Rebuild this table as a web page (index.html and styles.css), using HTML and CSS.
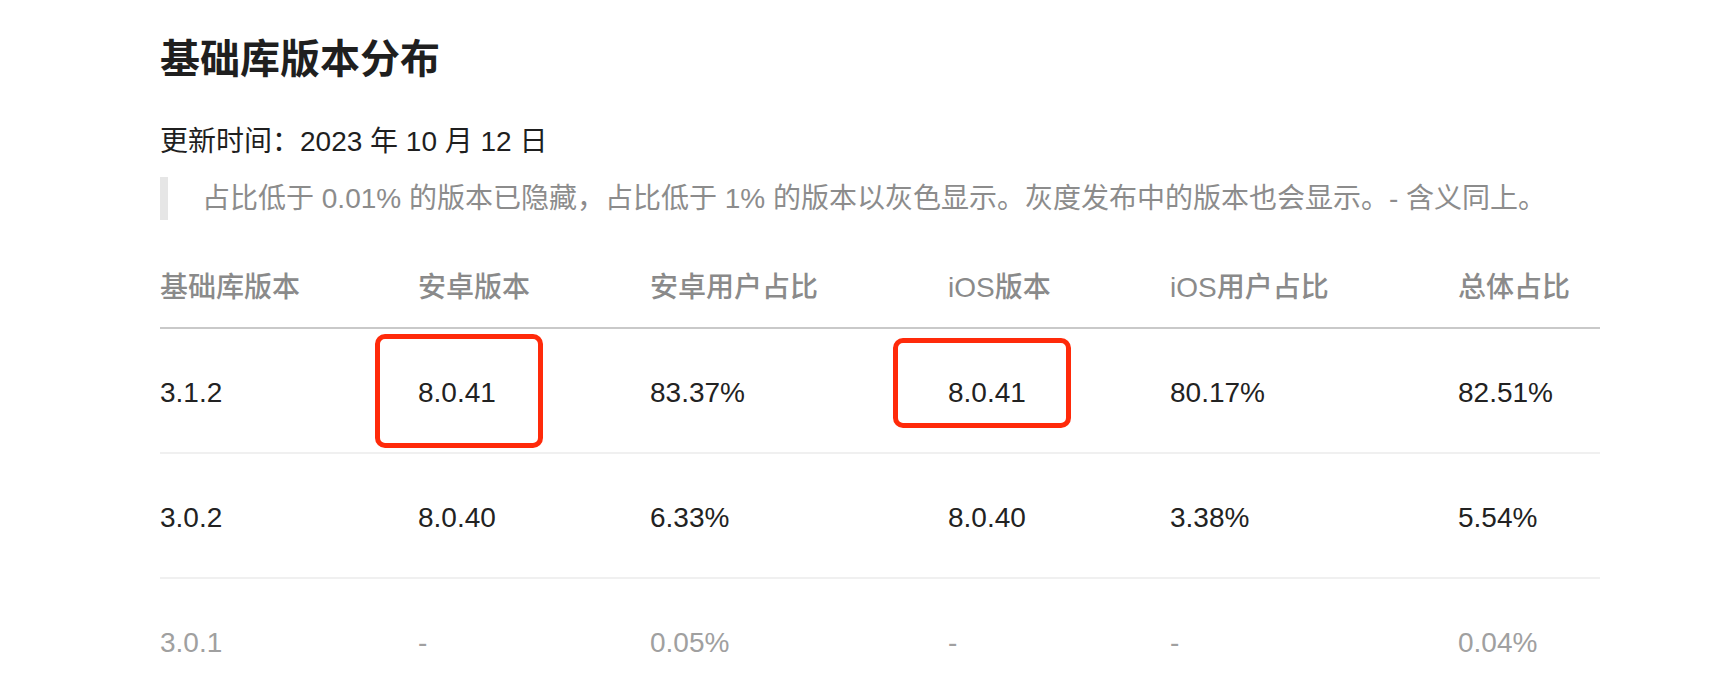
FILE: index.html
```html
<!DOCTYPE html>
<html lang="zh-CN">
<head>
<meta charset="utf-8">
<title>基础库版本分布</title>
<link rel="stylesheet" href="styles.css">
</head>
<body>
<main class="page">
  <h1 class="title">基础库版本分布</h1>
  <p class="updated">更新时间：2023 年 10 月 12 日</p>
  <blockquote class="note">占比低于 0.01% 的版本已隐藏，占比低于 1% 的版本以灰色显示。灰度发布中的版本也会显示。- 含义同上。</blockquote>
  <table class="dist">
    <colgroup>
      <col class="c1"><col class="c2"><col class="c3"><col class="c4"><col class="c5"><col class="c6">
    </colgroup>
    <thead>
      <tr>
        <th>基础库版本</th>
        <th>安卓版本</th>
        <th>安卓用户占比</th>
        <th>iOS版本</th>
        <th>iOS用户占比</th>
        <th>总体占比</th>
      </tr>
    </thead>
    <tbody>
      <tr>
        <td>3.1.2</td>
        <td class="marked">8.0.41<span class="mark mark-a"></span></td>
        <td>83.37%</td>
        <td class="marked">8.0.41<span class="mark mark-b"></span></td>
        <td>80.17%</td>
        <td>82.51%</td>
      </tr>
      <tr>
        <td>3.0.2</td>
        <td>8.0.40</td>
        <td>6.33%</td>
        <td>8.0.40</td>
        <td>3.38%</td>
        <td>5.54%</td>
      </tr>
      <tr class="minor">
        <td>3.0.1</td>
        <td>-</td>
        <td>0.05%</td>
        <td>-</td>
        <td>-</td>
        <td>0.04%</td>
      </tr>
    </tbody>
  </table>
</main>
</body>
</html>
```
FILE: styles.css
```css
html, body {
  margin: 0;
  padding: 0;
  background: #ffffff;
}

body {
  font-family: "Liberation Sans", "Noto Sans CJK SC", sans-serif;
  color: #222222;
  overflow: hidden;
}

.page {
  padding: 0 0 0 160px;
  display: flex;
  flex-direction: column;
  align-items: flex-start;
}

.title {
  margin: 28px 0 0;
  font-family: "Noto Sans CJK SC", sans-serif;
  font-size: 40px;
  line-height: 56px;
  font-weight: 700;
  color: #1f1f1f;
  letter-spacing: 0;
}

.updated {
  margin: 38px 0 0;
  font-size: 28px;
  line-height: 40px;
  color: #1f1f1f;
}

.note {
  margin: 15px 0 0;
  padding: 0 0 0 34px;
  border-left: 8px solid #e6e6e6;
  font-size: 28px;
  line-height: 43px;
  color: #8c8c8c;
  white-space: nowrap;
}

.dist {
  margin-top: 29px;
  width: 1440px;
  table-layout: fixed;
  border-collapse: separate;
  border-spacing: 0;
  font-size: 28px;
}

.c1 { width: 216px; }
.c2 { width: 232px; }
.c3 { width: 298px; }
.c4 { width: 222px; }
.c5 { width: 288px; }
.c6 { width: 184px; }

.dist th {
  padding: 20px 0 20px 42px;
  line-height: 38px;
  text-align: left;
  font-weight: 500;
  color: #8a8a8a;
  border-bottom: 2px solid #c9c9c9;
  white-space: nowrap;
}

.dist td {
  padding: 44px 0 39px 42px;
  line-height: 40px;
  text-align: left;
  color: #222222;
  border-bottom: 2px solid #f0f0f0;
  white-space: nowrap;
}

.dist th:first-child,
.dist td:first-child {
  padding-left: 0;
}

.dist .minor td {
  color: #a0a0a0;
}

.marked {
  position: relative;
}

.mark {
  position: absolute;
  box-sizing: border-box;
  border: 5px solid #ff2a0a;
  border-radius: 10px;
}

.mark-a {
  left: -1px;
  top: 5px;
  width: 168px;
  height: 114px;
}

.mark-b {
  left: -13px;
  top: 9px;
  width: 178px;
  height: 90px;
}
```
